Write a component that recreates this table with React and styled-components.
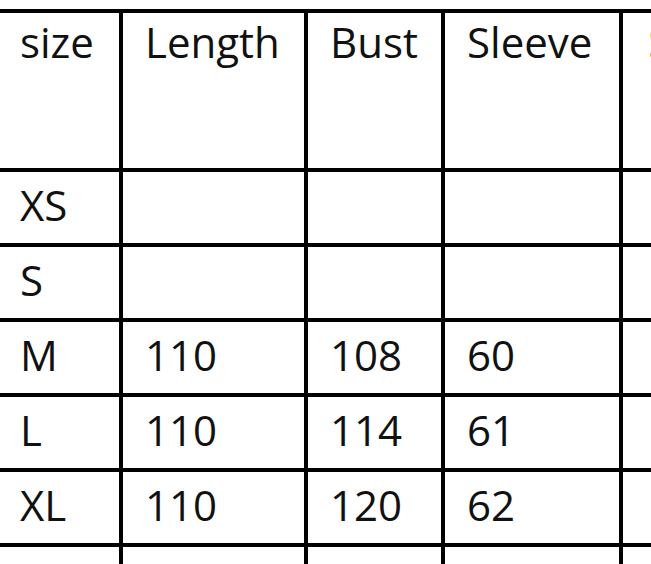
import React from "react";
import styled, { createGlobalStyle } from "styled-components";

const GlobalStyle = createGlobalStyle`
  html, body {
    margin: 0;
    padding: 0;
    background: #ffffff;
    overflow: hidden;
  }
  body {
    font-family: "Open Sans", "Liberation Sans", sans-serif;
  }
`;

const columns = ["size", "Length", "Bust", "Sleeve"];

const rows = [
  ["XS", "", "", ""],
  ["S", "", "", ""],
  ["M", "110", "108", "60"],
  ["L", "110", "114", "61"],
  ["XL", "110", "120", "62"],
  ["", "", "", ""],
];

const App = () => {
  return (
    <>
      <GlobalStyle />
      <Page>
        <Grid>
          {columns.map((c) => (
            <HeadCell key={c}>{c}</HeadCell>
          ))}
          <HeadCell $accent>Shoulder</HeadCell>
          {rows.map((r, i) => (
            <React.Fragment key={i}>
              {r.map((v, j) => (
                <Cell key={j}>{v}</Cell>
              ))}
              <Cell />
            </React.Fragment>
          ))}
        </Grid>
      </Page>
    </>
  );
};
export default App;

const Page = styled.div`
  width: 651px;
  height: 564px;
  overflow: hidden;
`;

const Grid = styled.div`
  display: grid;
  grid-template-columns: 121px 181px 133px 174px 180px;
  grid-template-rows: 155px repeat(6, 71px);
  gap: 4px;
  padding: 4px;
  background: #000000;
  width: max-content;
  margin-left: -6px;
  margin-top: 9px;
`;

const Cell = styled.div`
  background: #ffffff;
  color: #111111;
  font-size: 42px;
  line-height: 1.2;
  padding: 8px 0 0 22px;
  white-space: nowrap;
`;

const HeadCell = styled(Cell)`
  padding-top: 4px;
  padding-left: ${(p) => (p.$accent ? "25px" : "22px")};
  color: ${(p) => (p.$accent ? "#f0a830" : "#111111")};
`;
